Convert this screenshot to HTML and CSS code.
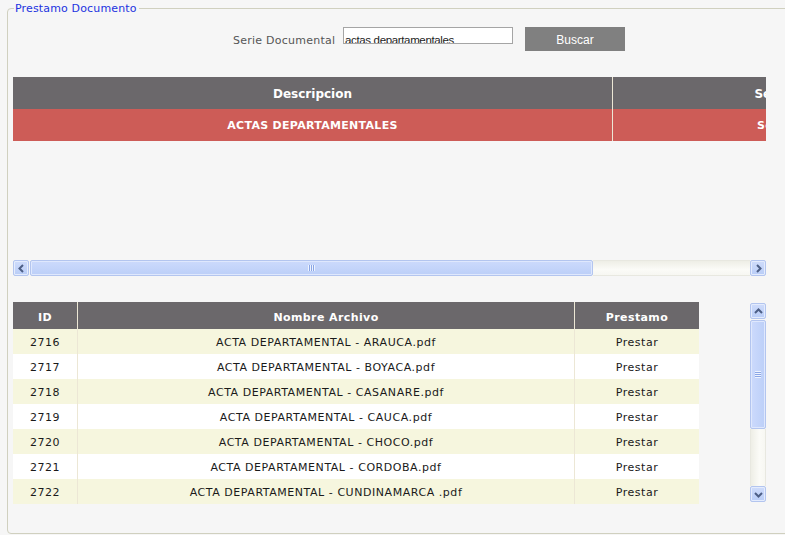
FILE: index.html
```html
<!DOCTYPE html>
<html lang="es">
<head>
<meta charset="utf-8">
<title>Prestamo Documento</title>
<link rel="stylesheet" href="styles.css">
</head>
<body>
<fieldset class="panel">
  <legend class="panel-title">Prestamo Documento</legend>

  <div class="search">
    <span class="search-label">Serie Documental</span>
    <div class="search-input"><span>actas departamentales</span></div>
    <button class="search-btn" type="button">Buscar</button>
  </div>

  <div class="grid1">
    <div class="grid1-view">
      <table class="series">
        <thead>
          <tr><th class="c-desc">Descripcion</th><th class="c-serie">Serie Documental</th></tr>
        </thead>
        <tbody>
          <tr class="sel"><td>ACTAS DEPARTAMENTALES</td><td class="c-serie">Serie Documental</td></tr>
        </tbody>
      </table>
    </div>
    <div class="hscroll">
      <div class="sb-btn"><svg width="9" height="9" viewBox="0 0 9 9"><path d="M6 1 L2.5 4.5 L6 8" fill="none" stroke="#4d5f86" stroke-width="2"/></svg></div>
      <div class="h-thumb"><span class="grip-v"></span></div>
      <div class="h-track"></div>
      <div class="sb-btn"><svg width="9" height="9" viewBox="0 0 9 9"><path d="M3 1 L6.5 4.5 L3 8" fill="none" stroke="#4d5f86" stroke-width="2"/></svg></div>
    </div>
  </div>

  <div class="grid2">
    <table class="files">
      <thead>
        <tr><th class="c-id">ID</th><th class="c-name">Nombre Archivo</th><th class="c-pr">Prestamo</th></tr>
      </thead>
      <tbody>
        <tr><td>2716</td><td>ACTA DEPARTAMENTAL - ARAUCA.pdf</td><td>Prestar</td></tr>
        <tr><td>2717</td><td>ACTA DEPARTAMENTAL - BOYACA.pdf</td><td>Prestar</td></tr>
        <tr><td>2718</td><td>ACTA DEPARTAMENTAL - CASANARE.pdf</td><td>Prestar</td></tr>
        <tr><td>2719</td><td>ACTA DEPARTAMENTAL - CAUCA.pdf</td><td>Prestar</td></tr>
        <tr><td>2720</td><td>ACTA DEPARTAMENTAL - CHOCO.pdf</td><td>Prestar</td></tr>
        <tr><td>2721</td><td>ACTA DEPARTAMENTAL - CORDOBA.pdf</td><td>Prestar</td></tr>
        <tr><td>2722</td><td>ACTA DEPARTAMENTAL - CUNDINAMARCA .pdf</td><td>Prestar</td></tr>
      </tbody>
    </table>
    <div class="vscroll">
      <div class="sb-btn"><svg width="9" height="9" viewBox="0 0 9 9"><path d="M1 6 L4.5 2.5 L8 6" fill="none" stroke="#4d5f86" stroke-width="2"/></svg></div>
      <div class="v-thumb"><span class="grip-h"></span></div>
      <div class="v-track"></div>
      <div class="sb-btn"><svg width="9" height="9" viewBox="0 0 9 9"><path d="M1 3 L4.5 6.5 L8 3" fill="none" stroke="#4d5f86" stroke-width="2"/></svg></div>
    </div>
  </div>
</fieldset>
</body>
</html>
```

FILE: styles.css
```css
html, body {
  margin: 0;
  padding: 0;
  background: #f6f6f6;
  overflow: hidden;
}
body {
  font-family: "DejaVu Sans", Verdana, sans-serif;
  font-size: 11px;
  color: #1a1a1a;
  width: 785px;
  height: 535px;
}
.panel {
  box-sizing: border-box;
  width: 820px;
  height: 533px;
  margin: 1px 0 0 7px;
  padding: 0 0 0 5px;
  border: 1px solid #d0d0bf;
  border-radius: 4px;
  min-width: 0;
}
.panel-title {
  margin-left: 1px;
  padding: 0 2px 0 1px;
  font-size: 11px;
  line-height: 14px;
  letter-spacing: 0.15px;
  color: #2233e0;
  position: relative;
  top: 1px;
}
.search {
  display: flex;
  align-items: flex-start;
  margin: 12px 0 0 220px;
  height: 24px;
}
.search-label {
  color: #555;
  font-size: 11px;
  line-height: 13px;
  letter-spacing: 0.25px;
  margin-top: 7px;
  width: 110px;
}
.search-input {
  box-sizing: border-box;
  width: 170px;
  height: 17px;
  border: 1px solid #a5a5a5;
  background: #fff;
  overflow: hidden;
  font-family: "Liberation Sans", Arial, sans-serif;
  font-size: 11.5px;
  color: #222;
  padding-left: 1px;
}
.search-input span {
  display: block;
  line-height: 12px;
  padding-top: 6px;
  letter-spacing: -0.35px;
}
.search-btn {
  margin-left: 12px;
  width: 100px;
  height: 24px;
  border: 0;
  padding: 1px 0 0;
  background: #808080;
  color: #fff;
  font-family: "Liberation Sans", Arial, sans-serif;
  font-size: 12px;
}
.grid1 {
  margin-top: 26px;
  width: 753px;
  display: flex;
  flex-direction: column;
}
.grid1-view {
  height: 184px;
  overflow: hidden;
}
.series {
  border-collapse: collapse;
  width: 1003px;
  table-layout: fixed;
}
.series th {
  background: #6b686b;
  color: #fff;
  font-size: 12px;
  font-weight: bold;
  height: 30px;
  padding: 2px 0 0;
  text-align: center;
}
.series td {
  background: #cd5c57;
  color: #fff;
  font-weight: bold;
  font-size: 11px;
  letter-spacing: 0.3px;
  height: 31px;
  padding: 1px 0 0;
  text-align: center;
}
.series .c-desc { width: 599px; }
.series th + th, .series td + td { border-left: 1px solid #ece7d5; }
.hscroll {
  display: flex;
  height: 16px;
  margin-top: -1px;
}
.sb-btn {
  box-sizing: border-box;
  width: 16px;
  height: 16px;
  flex: none;
  background: linear-gradient(#cfdcfb, #b9cdf7);
  border: 1px solid #b3c5ef;
  box-shadow: inset 0 0 0 1px #e4ecfd;
  border-radius: 2px;
  display: flex;
  align-items: center;
  justify-content: center;
}
.h-thumb {
  box-sizing: border-box;
  width: 563px;
  margin-left: 1px;
  height: 16px;
  background: linear-gradient(#ccdafc, #bccff8);
  border: 1px solid #b3c5ef;
  box-shadow: inset 0 0 0 1px #dfe8fd;
  border-radius: 2px;
  display: flex;
  align-items: center;
  justify-content: center;
}
.grip-v {
  width: 7px;
  height: 6px;
  background: repeating-linear-gradient(90deg, #eef3fe 0 1px, #8aa6e6 1px 2px);
}
.h-track {
  flex: 1;
  height: 16px;
  box-sizing: border-box;
  border-top: 1px solid #e8e8e0;
  border-bottom: 1px solid #e8e8e0;
  background: linear-gradient(#eeeee6, #fbfbf7 60%, #f7f7f2);
}
.grid2 {
  margin-top: 26px;
  width: 753px;
  display: flex;
  justify-content: space-between;
  align-items: flex-start;
}
.files {
  border-collapse: collapse;
  width: 686px;
  table-layout: fixed;
}
.files th {
  background: #6b686b;
  color: #fff;
  font-size: 11px;
  font-weight: bold;
  letter-spacing: 0.4px;
  height: 24px;
  padding: 3px 0 0;
  text-align: center;
}
.files td {
  height: 24px;
  padding: 1px 0 0;
  text-align: center;
  font-size: 11px;
  letter-spacing: 0.55px;
}
.files tbody tr:nth-child(odd) td { background: #f6f6de; }
.files tbody tr:nth-child(even) td { background: #fff; }
.files th + th, .files td + td { border-left: 1px solid #ece7d5; }
.files .c-id { width: 64px; }
.files .c-pr { width: 124px; }
.vscroll {
  margin-top: 1px;
  width: 16px;
  height: 199px;
  display: flex;
  flex-direction: column;
}
.v-thumb {
  box-sizing: border-box;
  height: 109px;
  margin-top: 1px;
  width: 16px;
  background: linear-gradient(90deg, #ccdafc, #bccff8);
  border: 1px solid #b3c5ef;
  box-shadow: inset 0 0 0 1px #dfe8fd;
  border-radius: 2px;
  display: flex;
  align-items: center;
  justify-content: center;
}
.grip-h {
  width: 6px;
  height: 7px;
  background: repeating-linear-gradient(180deg, #eef3fe 0 1px, #8aa6e6 1px 2px);
}
.v-track {
  flex: 1;
  width: 16px;
  box-sizing: border-box;
  border-left: 1px solid #e8e8e0;
  border-right: 1px solid #e8e8e0;
  background: linear-gradient(90deg, #eeeee6, #fbfbf7 60%, #f7f7f2);
}
```
